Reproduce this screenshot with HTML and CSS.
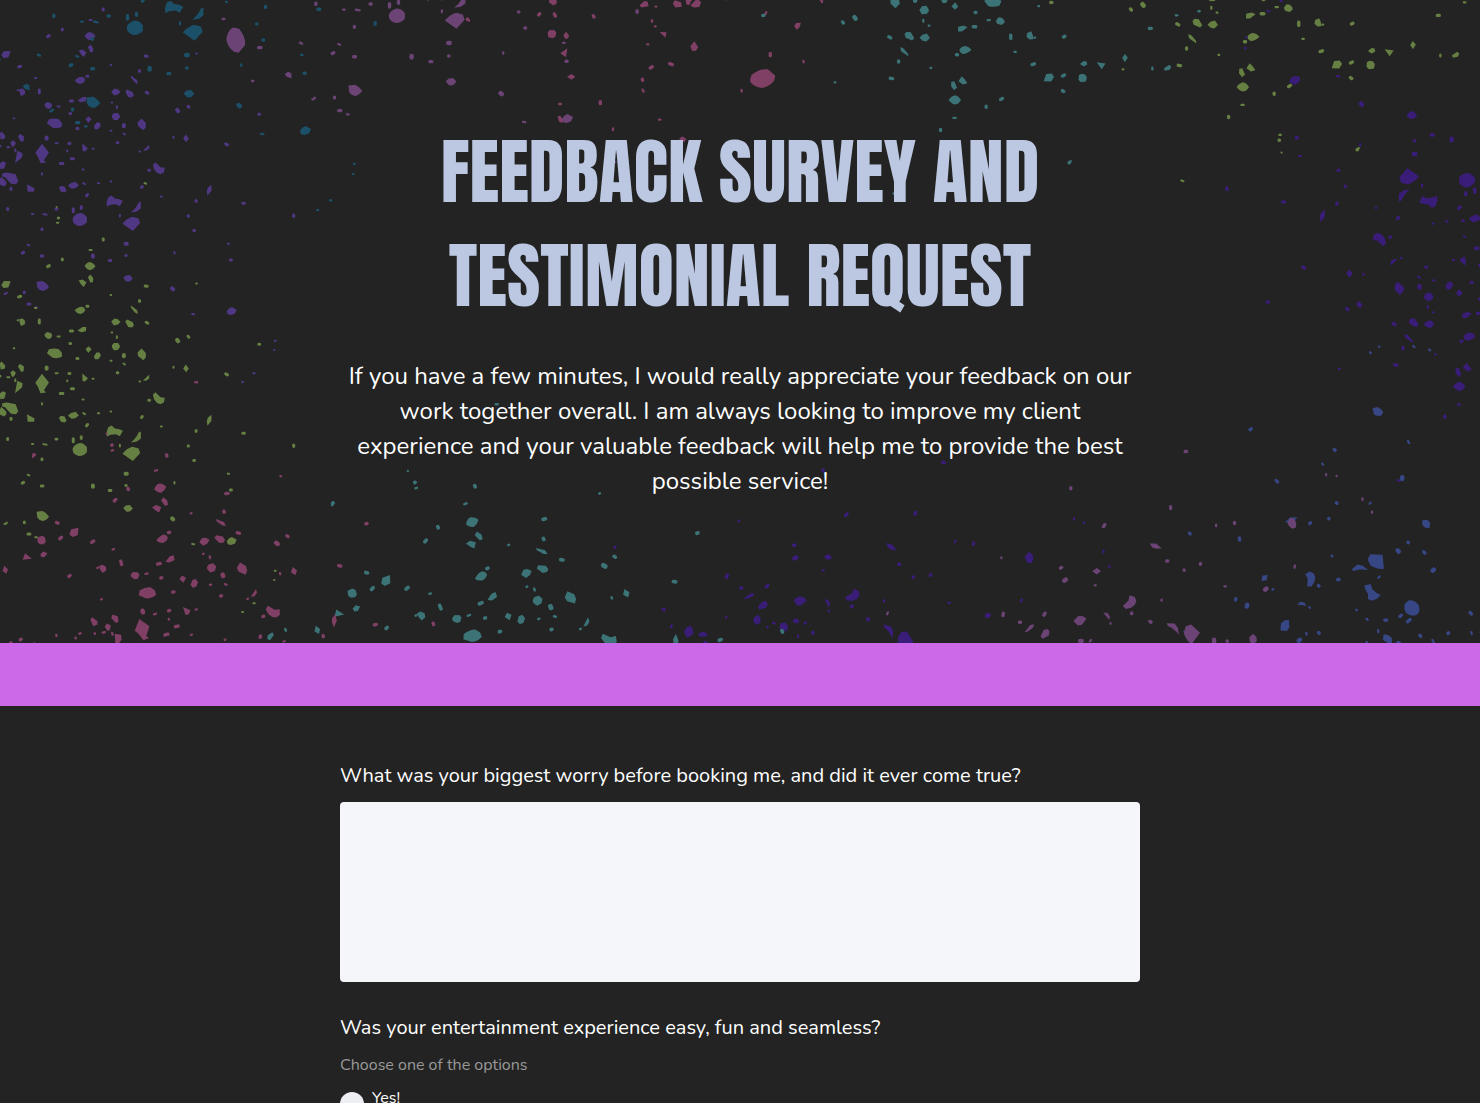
FILE: index.html
```html
<!DOCTYPE html>
<html lang="en">
<head>
<meta charset="utf-8">
<meta name="viewport" content="width=device-width, initial-scale=1">
<title>Feedback Survey and Testimonial Request</title>
<link rel="stylesheet" href="styles.css">
</head>
<body>
<header class="hero">
  <svg class="confetti" viewBox="0 0 1480 643" preserveAspectRatio="xMidYMid slice" aria-hidden="true">
    <defs>
      <g id="splatter">
        <!-- specks: round-capped strokes, from fine to coarse -->
        <path class="speck" stroke-width="6" d="M269 60h6M105 234h4M173 320h6M41 355h2M335 308h2M351 319v5M332 393h3M371 401l4 3M521 411v3M167 430h6M202 452v2M278 447h3M22 442h6M46 449v5M53 271h2M126 520v4M248 509h3M250 550l5 3M294 550h4M332 545h2M483 590h3M130 643l10 2M96 643h4M360 645v5M83 735l5 2M524 757v4M19 879h2M106 923h5M577 943l6 1M589 161h2M332 195h2M419 455h2M1 438v2M170 -69h0M171 -22h4M434 -141l5 2M825 1023h3M823 1051h1M761 1121h4M727 1147h3M684 732h4"/>
        <path class="speck" stroke-width="9" d="M310 27v3M187 87v3M143 110l5-3M436 168l6 1M56 201l6-2M419 212v3M261 229h3M439 277l5 3M565 319l2 3M118 270v9M211 303h7M210 341h2M231 386h3M207 431h3M352 429h2M214 477h7M181 491h8M447 511h2M33 565v4M427 560l-2 3M260 588l3-4M244 621v5M220 627v9M589 602v3M565 649h1M126 688v2M582 692h2M378 767h1M67 760l4-2M124 769h5M328 782h5M73 877v2M84 913h6M692 781h3M678 432l5 3M777 343h3M882 646v4M729 610h5M23 626v3M168 628h3M175 -36h1M-33 -65h1"/>
        <path class="speck" stroke-width="12" d="M372 375v4M140 413v4M532 330l3 4M517 866l3 3M377 732h4M279 767v4"/>
        <!-- larger flakes -->
        <path d="M254 108q7-12 17-12 12 4 16 13-7 10-17 12-10-2-16-13zM236 152l12-3 12 9-9 13-8-8zM264 141l8-7 8 11-1 12-8 1zM12 153l20 1-7 19-15 1-6-9zM224 241q14-12 25-10 7 4 7 11-4 8-15 10-12-2-17-11zM334 275l10-9 10 2 8 8-8 8-12 3zM376 275l6-6 17 8 3 10-6 6-11-2zM393 227l19 14 2 11-9-4-12-15zM134 312l8-6 12 4 3 8-7 9-9-1-7-8zM233 302l15-11 11 0-1 13-15 3zM336 346l6-7 13 0 6 11-7 10-12 1-6-9zM413 368l12-12 13 13 0 13-7 9-16-12zM141 370l6-12q18-5 30 0l9 11v12q-13 7-28 3zM257 357l9-8 9 9-10 11zM282 379l8-11h9l4 10-8 10h-10zM58 267l10-1 8 8-2 10-11 4-4-10zM-1 400l6-5 11 13-2 9-12 2zM54 410l6-8 12 8-1 14-8 2zM31 428l8-7 9 8-6 11-6 1zM52 453l16 7-2 13-21 17zM106 459l20-27 21 26-15 23 6 7-16 2-9-21zM247 431l17 14-7 9h-9zM550 416l8-12 9 12-8 11zM448 435v11l-9 7-10-1zM-1 491l10-7 9 5-5 17-12 2zM7 520l14-2 26 5 8 21-7 9-15-1-18-20-9-3zM-1 540l5-9 14 13 2 8-7 8-13-5zM81 553l23 13-2 10-19 0zM177 564l6-6 11 2 6 13-6 5-11-2zM204 558l8-8 15-4 10 11-11 8-11 2zM459 495l8-8 15 15 13 2-3 14-11 5-10-4-8-10zM635 555v18l-12 15-2-14 3-10zM325 592l10-5 10 9q14 1 24 7l-9 16-12-6-16 2-11 5-1-13zM423 605v21l-12 9-18 3q18-15 23-30zM218 658q2-10 15-16 9-5 20 2l8 8 0 15q-8 12-24 12-14-4-18-13zM368 672q12-16 30-21l18 5 5 14-22 24zM370 835l8-8 12-1 9 10-9 9-10 1zM110 846l18-2q13 6 19 16-4 9-18 14-12-2-17-11zM681 935q5-10 15-13l15 8-6 12-12 4-9-2z"/>
        <!-- outlying flakes on the near side of the burst -->
        <g transform="translate(-72 161) rotate(90) scale(.891) translate(-545 -102)">
          <path class="speck" stroke-width="7" d="M293 59l3 3M845 61v4M854 79h2M831 133h3M567 312h5M1114 270v5M866 359h4M739 453v4M728 385v5M1188 37l-3 6M1355 2v4M1300 183v4M817 269l3 6"/>
          <path class="speck" stroke-width="10" d="M508 41l-3 4M552 42l3 6M816 238l1 3M690 305v6M669 47l2 4M1200 160v7M898 191l8 3M840 204l6-4"/>
          <path d="M532 97l7-7 14 1 5 8-3 11-8 5-13-3zM579 106l8-11 9 11-2 9-9 2zM570 160l21-15-4 27zM590 230l13-8 12 8-11 9zM562 349l8-2 10 16-6 6-9-5zM868 96l21 1-4 16zM960 139l12-15 12 18-7 10-11 1zM1140 236l4-11q24-20 49-17l22 19-3 14q-13 20-37 23-24-3-35-18zM926 417l10-8 12 8-6 10zM1272 78l5-9 15-1-4 14-9 7z"/>
        </g>
      </g>
    </defs>
    <use href="#splatter" class="violet" transform="scale(.333)"/>
    <use href="#splatter" class="green" transform="translate(0 230) scale(.333)"/>
    <use href="#splatter" class="petrol" transform="translate(135 28) scale(.374) translate(-240 -660)"/>
    <use href="#splatter" class="rose" transform="translate(552 34) rotate(-90) scale(.374) translate(72 -161)"/>
    <use href="#splatter" class="mauve" transform="translate(397 16) scale(.374) translate(-240 -660)"/>
    <use href="#splatter" class="teal" transform="translate(955 100) rotate(179) scale(.374) translate(-270 -108)"/>
    <use href="#splatter" class="green" transform="translate(1243 87) rotate(179) scale(.374) translate(-270 -108)"/>
    <use href="#splatter" class="indigo" transform="translate(1467 180) rotate(179) scale(.374) translate(-240 -660)"/>
    <use href="#splatter" class="indigo" transform="translate(853 595) rotate(-75) scale(.375) translate(-478 -506)"/>
    <use href="#splatter" class="blue" transform="translate(1412 608) rotate(-131) scale(.375) translate(-240 -660)"/>
    <use href="#splatter" class="mauve" transform="translate(1130 602) rotate(-89) scale(.375) translate(-478 -506)"/>
    <use href="#splatter" class="teal" transform="translate(472 522) rotate(-22) scale(.403) translate(-270 -108)"/>
    <use href="#splatter" class="rose" transform="translate(160 488) rotate(-15) scale(.374) translate(-270 -108)"/>
  </svg>
  <div class="hero-text">
    <h1 class="title">Feedback Survey and Testimonial Request</h1>
    <p class="intro">If you have a few minutes, I would really appreciate your feedback on our work together overall. I am always looking to improve my client experience and your valuable feedback will help me to provide the best possible service!</p>
  </div>
</header>
<div class="band"></div>
<main>
  <form class="survey">
    <div class="question">
      <label class="label" for="worry">What was your biggest worry before booking me, and did it ever come true?</label>
      <textarea class="answer" id="worry" name="worry"></textarea>
    </div>
    <fieldset class="question">
      <legend class="label">Was your entertainment experience easy, fun and seamless?</legend>
      <p class="hint">Choose one of the options</p>
      <label class="option"><input class="radio" type="radio" name="experience" value="yes"><span>Yes!</span></label>
    </fieldset>
  </form>
</main>
</body>
</html>
```
FILE: styles.css
```css
* { box-sizing: border-box; }

body {
  margin: 0;
  background: #232323;
  color: #fff;
  font-family: Nunito, "Noto Sans", sans-serif;
}

.hero {
  position: relative;
  overflow: hidden;
  padding: 120px 20px 144px;
}

.confetti {
  position: absolute;
  inset: 0;
  width: 100%;
  height: 100%;
}

.speck { fill: none; stroke: currentColor; stroke-linecap: round; }
.confetti use { fill: currentColor; }
.violet { color: #4f3783; }
.green { color: #668043; }
.petrol { color: #1b5068; }
.rose { color: #803f65; }
.mauve { color: #6b4475; }
.teal { color: #3b7376; }
.indigo { color: #3a1d78; }
.blue { color: #374785; }

.hero-text {
  position: relative;
  max-width: 800px;
  margin: 0 auto;
  text-align: center;
}

.title {
  margin: 0 0 31px;
  color: #bcc8e1;
  font-family: Anton, "Liberation Sans Narrow", "Liberation Sans", sans-serif;
  font-size: 72px;
  font-weight: 400;
  line-height: 104px;
  text-transform: uppercase;
}

.intro {
  margin: 0;
  font-size: 24px;
  line-height: 35px;
}

.band {
  height: 63px;
  background: #cb69e8;
}

.survey {
  max-width: 840px;
  margin: 0 auto;
  padding: 56px 20px;
}

.question {
  margin: 0 0 32px;
  padding: 0;
  border: 0;
}

.label {
  display: block;
  padding: 0;
  font-size: 20px;
  line-height: 28px;
}

.answer {
  display: block;
  width: 100%;
  height: 180px;
  margin-top: 12px;
  border: 0;
  border-radius: 4px;
  background: #f5f6f9;
  resize: none;
}

.hint {
  margin: 12px 0;
  color: #999;
  font-size: 16px;
  line-height: 22px;
}

.option {
  display: flex;
  gap: 8px;
  font-size: 16px;
  line-height: 20px;
}

.radio {
  appearance: none;
  width: 24px;
  height: 24px;
  margin: 4px 0 0;
  border-radius: 50%;
  background: #eeeff2;
}
```
